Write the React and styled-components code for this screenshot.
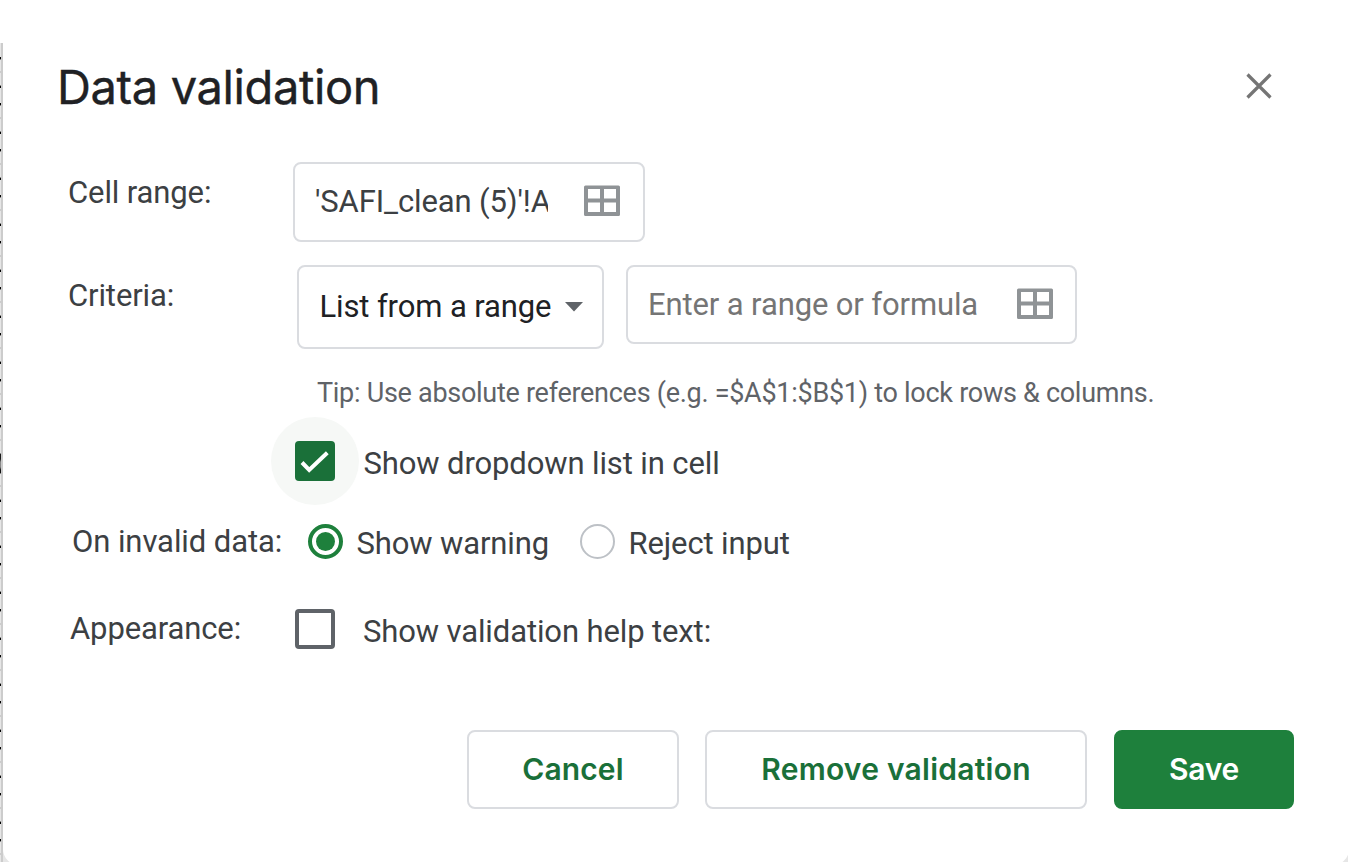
import React from "react";
import styled, { createGlobalStyle } from "styled-components";

const GlobalStyle = createGlobalStyle`
  * { box-sizing: border-box; }
  html, body { margin: 0; background: #fff; overflow: hidden; }
  body { font-family: Roboto, "Liberation Sans", sans-serif; font-size: 31px; color: #3c4043; }
`;

const Page = styled.div`
  width: 1348px;
  height: 862px;
  overflow: hidden;
  display: flex;
  background: linear-gradient(#fff 0 43px, #e6e6e6 43px);
`;

/* Sliver of the spreadsheet that shows beside the dialog */
const SheetEdge = styled.div`
  flex: none;
  width: 3px;
  height: 819px;
  margin-top: 43px;
  background:
    linear-gradient(#1a1a1a 0 5px, #888 8px 13px, #111 16px) 0 411px / 1px 19px no-repeat,
    linear-gradient(#ccc, #ccc) 1px 0 / 2px 100% no-repeat,
    repeating-linear-gradient(transparent 0 14px, #000 14px 16px, #888 16px 17px, transparent 17px 28px, #ccc 28px 30px, transparent 30px 42px, #888 42px 43px, #000 43px 45px, transparent 45px 46px),
    #e6e6e6;
`;

const Dialog = styled.div`
  flex: none;
  width: 1346px;
  height: 865px;
  background: #fff;
  border-radius: 0 0 16px 16px;
  display: flex;
  flex-direction: column;
`;

const Header = styled.header`
  display: flex;
  justify-content: space-between;
  align-items: flex-start;
  padding: 56px 77px 0 54px;
  height: 162px;
`;

const Title = styled.h1`
  margin: 0;
  font: 400 47px/62px Inter, "Open Sans", sans-serif;
  letter-spacing: -0.37px;
  -webkit-text-stroke: 0.4px #202124;
  color: #202124;
  white-space: nowrap;
`;

const CloseButton = styled.button`
  border: 0;
  padding: 0;
  margin-top: 17px;
  width: 26px;
  height: 26px;
  background: none;
  svg { display: block; }
`;

const Row = styled.div`
  display: flex;
  align-items: flex-start;
  height: ${(p) => p.$height}px;
  padding-left: ${(p) => p.$indent || 0}px;
`;

const Text = styled.span`
  font-size: ${(p) => p.$size || 31}px;
  line-height: 36px;
  letter-spacing: ${(p) => p.$spacing ?? -0.12}px;
  margin-top: ${(p) => p.$top || 0}px;
  margin-left: ${(p) => p.$left || 0}px;
  color: ${(p) => p.$color || "#3c4043"};
  white-space: nowrap;
`;

const Label = styled(Text)`
  flex: none;
  width: ${(p) => p.$width}px;
`;

const Field = styled.div`
  display: flex;
  align-items: center;
  flex: none;
  width: ${(p) => p.$width}px;
  height: ${(p) => p.$height || 79}px;
  margin-left: ${(p) => p.$left || 0}px;
  padding: 0 ${(p) => p.$right || 23}px ${(p) => p.$bottom || 0}px 20px;
  justify-content: space-between;
  border: 2px solid #dadce0;
  border-radius: 8px;
`;

const Clip = styled.span`
  display: flex;
  width: ${(p) => p.$width}px;
  overflow: hidden;
`;

const Checkbox = styled.span`
  flex: none;
  display: flex;
  width: 40px;
  height: 40px;
  border-radius: 4px;
  border: ${(p) => (p.$checked ? "0" : "4px solid #5f6368")};
  background: ${(p) => (p.$checked ? "#1a7039" : "#fff")};
`;

const Halo = styled.span`
  flex: none;
  display: flex;
  align-items: center;
  justify-content: center;
  width: 88px;
  height: 88px;
  border-radius: 50%;
  background: #f6f8f6;
`;

const Radio = styled.span`
  flex: none;
  display: flex;
  align-items: center;
  justify-content: center;
  width: 35px;
  height: 35px;
  border-radius: 50%;
  border: ${(p) => (p.$checked ? "4px solid #1e803c" : "2px solid #bdc1c6")};
  &::after {
    content: "";
    width: 19px;
    height: 19px;
    border-radius: 50%;
    background: ${(p) => (p.$checked ? "#1e803c" : "transparent")};
  }
`;

const Choice = styled.div`
  display: flex;
  flex: none;
  width: ${(p) => p.$width}px;
`;

const Footer = styled.footer`
  display: flex;
  gap: 26px;
  padding-left: 464px;
`;

const Button = styled.button`
  flex: none;
  width: ${(p) => p.$width}px;
  height: 79px;
  padding: 0 0 2px;
  margin-left: ${(p) => (p.$primary ? 1 : 0)}px;
  border-radius: 8px;
  border: 2px solid ${(p) => (p.$primary ? "#1e803c" : "#dadce0")};
  background: ${(p) => (p.$primary ? "#1e803c" : "#fff")};
  color: ${(p) => (p.$primary ? "#fff" : "#1a7039")};
  font: 600 30px/36px Inter, "Open Sans", sans-serif;
  letter-spacing: ${(p) => p.$spacing}px;
  white-space: nowrap;
`;

const GridIcon = () => (
  <svg width="36" height="32" viewBox="0 0 36 32">
    <path
      fill="#8f9396"
      fillRule="evenodd"
      d="M1.5 0.5H34.5Q36 0.5 36 2V29.5Q36 31 34.5 31H1.5Q0 31 0 29.5V2Q0 0.5 1.5 0.5ZM4 4V13.5H16V4ZM20 4V13.5H32V4ZM4 17.5V27H16V17.5ZM20 17.5V27H32V17.5Z"
    />
  </svg>
);

export default function App() {
  return (
    <Page>
      <GlobalStyle />
      <SheetEdge />
      <Dialog>
        <Header>
          <Title>Data validation</Title>
          <CloseButton aria-label="Close">
            <svg width="26" height="26" viewBox="0 0 26 26">
              <path d="M1.5 1.5L24.5 24.5M24.5 1.5L1.5 24.5" stroke="#757575" strokeWidth="3.2" />
            </svg>
          </CloseButton>
        </Header>

        <Row $height={103} $indent={65}>
          <Label $top={13} $width={225}>Cell range:</Label>
          <Field $width={352} $height={80} $bottom={2}>
            <Clip $width={233}><Text $top={2}>'SAFI_clean (5)'!A</Text></Clip>
            <GridIcon />
          </Field>
        </Row>

        <Row $height={110} $indent={65}>
          <Label $top={13} $width={229}>Criteria:</Label>
          <Field $width={307} $height={84} $right={19}>
            <Text $color="#202124" $left={0.5}>List from a range</Text>
            <svg width="18" height="10" viewBox="0 0 18 10">
              <path d="M0 0H18L9 9.5Z" fill="#5f6368" />
            </svg>
          </Field>
          <Field $width={451} $left={22} $bottom={1} $right={22}>
            <Text $color="#757575" $top={2}>Enter a range or formula</Text>
            <GridIcon />
          </Field>
        </Row>

        <Row $height={42} $indent={314}>
          <Text $size={27} $spacing={-0.28} $color="#5f6368">Tip: Use absolute references (e.g. =$A$1:$B$1) to lock rows &amp; columns.</Text>
        </Row>

        <Row $height={107} $indent={268}>
          <Halo>
            <Checkbox $checked>
              <svg width="40" height="40" viewBox="0 0 40 40">
                <path d="M7 21.5L14.2 29L32.3 11.8" fill="none" stroke="#fff" strokeWidth="4" />
              </svg>
            </Checkbox>
          </Halo>
          <Text $top={29} $left={4.5}>Show dropdown list in cell</Text>
        </Row>

        <Row $height={85} $indent={69}>
          <Label $width={236} $spacing={-0.08}>On invalid data:</Label>
          <Choice $width={272}>
            <Radio $checked />
            <Text $top={2} $left={13.5}>Show warning</Text>
          </Choice>
          <Choice $width={220}>
            <Radio />
            <Text $top={2} $left={13.5}>Reject input</Text>
          </Choice>
        </Row>

        <Row $height={121} $indent={67}>
          <Label $top={2} $width={225}>Appearance:</Label>
          <Checkbox />
          <Text $top={5} $left={28}>Show validation help text:</Text>
        </Row>

        <Footer>
          <Button $width={212} $spacing={0.1}>Cancel</Button>
          <Button $width={382} $spacing={0.25}>Remove validation</Button>
          <Button $width={180} $spacing={-0.2} $primary>Save</Button>
        </Footer>
      </Dialog>
    </Page>
  );
}
